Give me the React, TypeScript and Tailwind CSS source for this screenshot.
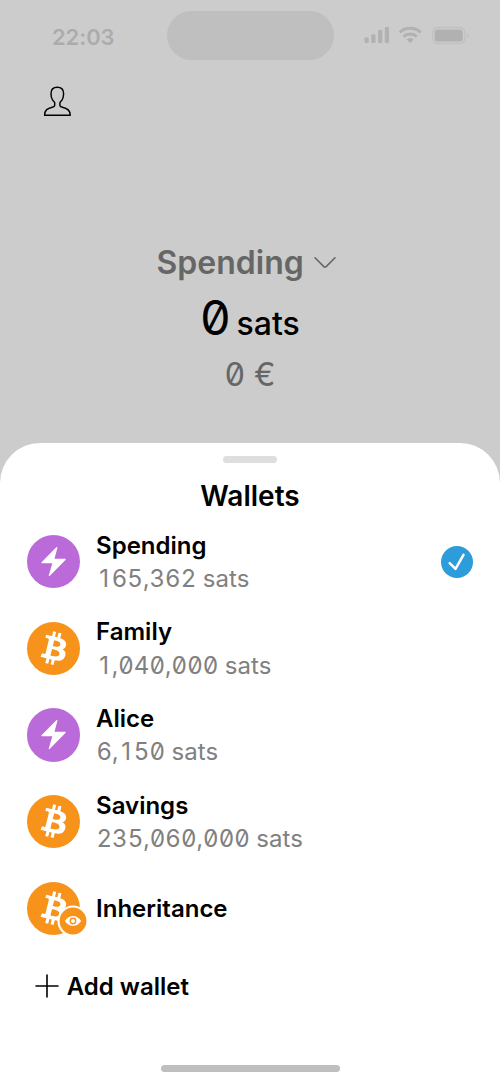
import type { ReactNode } from "react";

type Kind = "lightning" | "bitcoin" | "watch";

interface Wallet {
  name: string;
  amount?: string;
  kind: Kind;
  selected?: boolean;
}

const wallets: Wallet[] = [
  { name: "Spending", amount: "165,362 sats", kind: "lightning", selected: true },
  { name: "Family", amount: "1,040,000 sats", kind: "bitcoin" },
  { name: "Alice", amount: "6,150 sats", kind: "lightning" },
  { name: "Savings", amount: "235,060,000 sats", kind: "bitcoin" },
  { name: "Inheritance", kind: "watch" },
];

function BitcoinGlyph() {
  return (
    <svg viewBox="0 0 24 24" className="size-full" fill="#fff">
      <path
        transform="translate(0.3 0)"
        d="M17.288 10.291c.24-1.59-.974-2.45-2.64-3.03l.54-2.153-1.315-.33-.525 2.107c-.345-.087-.705-.167-1.064-.25l.526-2.127-1.32-.33-.54 2.165c-.285-.067-.565-.132-.84-.2l-1.815-.45-.35 1.407s.975.225.955.236c.535.136.63.486.615.766l-1.477 5.92c-.075.166-.24.406-.614.314.015.02-.96-.24-.96-.24l-.66 1.51 1.71.426.93.242-.54 2.19 1.32.327.54-2.17c.36.1.705.19 1.05.273l-.51 2.154 1.32.33.545-2.19c2.24.427 3.93.257 4.64-1.774.57-1.637-.03-2.58-1.217-3.196.854-.193 1.5-.76 1.68-1.93h.01zm-3.01 4.22c-.404 1.64-3.157.75-4.05.53l.72-2.9c.896.23 3.757.67 3.33 2.37zm.41-4.24c-.37 1.49-2.662.735-3.405.55l.654-2.64c.744.18 3.137.524 2.75 2.084v.006z"
      />
    </svg>
  );
}

function LightningGlyph() {
  return (
    <svg viewBox="0 0 54 54" className="size-full" fill="#fff">
      <path d="M29.900 12.100 14.700 27.600q-.6.9.4 1h10.500L22 41q0 1 .9.500L39.100 25q.5-.9-.4-1H27.800l3-11.200q0-1-.9-.7z" />
    </svg>
  );
}

function WalletIcon({ kind }: { kind: Kind }) {
  return (
    <div className={`relative size-[53.4px] rounded-full ${kind === "lightning" ? "bg-[#bb6bd9]" : "bg-[#f7931a]"}`}>
      {kind === "lightning" ? <LightningGlyph /> : <BitcoinGlyph />}
      {kind === "watch" && (
        <svg viewBox="0 0 32 32" className="absolute left-[30.6px] top-[23.7px] size-[32px]">
          <circle cx="16" cy="16" r="15.6" fill="#fff" />
          <circle cx="16" cy="16" r="13.4" fill="#f7931a" />
          <path d="M7.8 16Q11.3 11.1 16 11.1T24.2 16Q20.700 20.900 16 20.900T7.800 16z" fill="#fff" />
          <circle cx="16" cy="16" r="2.7" fill="none" stroke="#f7931a" strokeWidth="1.4" />
        </svg>
      )}
    </div>
  );
}

function StatusBar() {
  return (
    <div className="flex h-[49px] items-center text-[#acacac]">
      <div className="w-[114.500px] pl-[52px] pt-[3px] text-[22px] font-semibold leading-7 tracking-[-0.1px] [font-feature-settings:'zero'_0]">22:03</div>
      <div className="ml-[52px] h-[49px] w-[167px] rounded-full bg-[#bfbfbf]" />
      <svg width="106" height="20" viewBox="0 0 106 20" className="-mt-[2px] ml-[30px]" fill="#b1b1b1">
        <rect x="0.500" y="12.500" width="4.200" height="5.500" rx="1.300" />
        <rect x="7.300" y="9.300" width="4.200" height="8.700" rx="1.300" />
        <rect x="14.100" y="4.800" width="4.200" height="13.200" rx="1.300" />
        <rect x="20.800" y="2" width="4.200" height="16" rx="1.300" />
        <g fill="none" stroke="#b1b1b1" strokeWidth="3">
          <path d="M35.700 7.300a15.500 15.500 0 0 1 21 0" />
          <path d="M39.600 11.700a9.700 9.700 0 0 1 13.200 0" />
        </g>
        <path d="M42.700 14.500q3.500-2.800 7 0l-3.500 3.700z" />
        <rect x="68.800" y="2.500" width="32" height="16" rx="5" fill="none" stroke="#c0c0c0" strokeWidth="1.300" />
        <rect x="70.700" y="4.500" width="28" height="12" rx="3" />
        <path d="M103 7.800q1.800 1 1.800 2.700T103 13.200z" fill="#c0c0c0" />
      </svg>
    </div>
  );
}

// Tabular figures, with the plain (footless) numeral one centred in its cell.
function Amount({ value }: { value: string }) {
  return (
    <div className="h-[33px] pl-[0.400px] pt-[0.500px] text-[24px] leading-[33px] tracking-[0.040px] text-[#808080] [font-feature-settings:'zero'_1,'tnum'_1]">
      {value.split(/(1)/).map((part, i) =>
        part === "1" ? (
          <span key={i} className="inline-block w-[15.300px] text-center [font-feature-settings:'tnum'_0]">1</span>
        ) : (
          part
        ),
      )}
    </div>
  );
}

function WalletRow({ wallet }: { wallet: Wallet }) {
  return (
    <div className="flex h-[86.700px] items-center">
      <WalletIcon kind={wallet.kind} />
      <div className="ml-[16px] flex flex-1 flex-col whitespace-nowrap">
        <Label>{wallet.name}</Label>
        {wallet.amount && <Amount value={wallet.amount} />}
      </div>
      {wallet.selected && (
        <svg viewBox="0 0 32 32" className="size-[32px]">
          <circle cx="16" cy="16" r="16" fill="#2d9cdb" />
          <path d="m8.700 17.200 5.800 5.700 8-14" fill="none" stroke="#fff" strokeWidth="2.500" strokeLinecap="round" strokeLinejoin="round" />
        </svg>
      )}
    </div>
  );
}

function Label({ children }: { children: ReactNode }) {
  return <div className="h-[33px] text-[24px] font-semibold leading-[33px] text-black">{children}</div>;
}

export default function App() {
  return (
    <div className="flex h-[1083px] w-[500px] flex-col overflow-hidden bg-[#cccccc] font-['Inter',sans-serif] [font-feature-settings:'zero'_1]">
      <div className="flex h-[442.700px] flex-col pt-[11px]">
        <StatusBar />
        <svg width="30" height="34" viewBox="0 0 30 34" className="ml-[42px] mt-[24px]" fill="none" stroke="#000" strokeWidth="1.450">
          <path d="M2.700 31.300v-.8c0-4 3.300-6.300 7.500-7.200 1.700-.4 2.500-.6 2.500-1.800v-2.700c-.3-1.300-1.200-1-2.400-3.300C9.300 13.700 9 12 9 9.500c0-4.800 2.400-6.300 6.300-6.300s6.300 1.500 6.300 6.300c0 2.500-.3 4.200-1.300 6-1.200 2.300-2.100 2-2.400 3.300v2.700c0 1.200.8 1.400 2.500 1.800 4.200.9 7.700 3.200 7.700 7.200v.8z" />
        </svg>
        <div className="mt-[125px] flex h-[40px] items-center pl-[156.500px] text-[#666666]">
          <span className="w-[157px] text-[32px] font-semibold leading-[40px]">Spending</span>
          <svg width="22" height="14" viewBox="0 0 22 14" fill="none" stroke="currentColor" strokeWidth="1.600" strokeLinecap="round" strokeLinejoin="round">
            <path d="m1 1.800 8.800 8.800q1.200 1 2.400 0L21 1.800" />
          </svg>
        </div>
        <div className="mt-[7px] flex h-[56px] items-baseline justify-center gap-[6px] font-medium leading-[56px] text-black">
          <span className="text-[48px] font-normal">0</span>
          <span className="text-[32px]">sats</span>
        </div>
        <div className="mt-[9px] text-center text-[32px] leading-[40px] text-[#666666]">0 €</div>
      </div>
      <div className="flex flex-1 flex-col rounded-t-[40px] bg-white pt-[13.300px]">
        <div className="h-[6.700px] w-[53.400px] shrink-0 self-center rounded-full bg-[#dedede]" />
        <div className="mt-[15px] text-center text-[28px] font-semibold leading-[36px] text-black">Wallets</div>
        <div className="mt-[4.500px] flex flex-col px-[26.700px]">
          {wallets.map((wallet) => (
            <WalletRow key={wallet.name} wallet={wallet} />
          ))}
        </div>
        <div className="mt-[18px] flex items-center pl-[34.700px]">
          <svg width="24" height="24" viewBox="0 0 24 24" className="mr-[8px]" stroke="#000" strokeWidth="1.600" strokeLinecap="round">
            <path d="M1 12h22M12 1v22" />
          </svg>
          <Label>Add wallet</Label>
        </div>
        <div className="mb-[11px] mt-auto h-[6.700px] w-[179px] self-center rounded-full bg-[#bfbfbf]" />
      </div>
    </div>
  );
}
